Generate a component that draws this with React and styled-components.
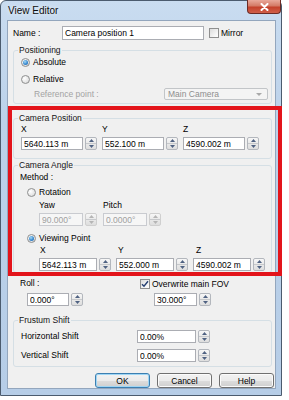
import React from "react";
import styled, { createGlobalStyle } from "styled-components";

const GlobalStyle = createGlobalStyle`
  html, body {
    margin: 0;
    padding: 0;
    background: #ffffff;
  }
  body {
    font-family: "Liberation Sans", Arial, sans-serif;
    font-size: 8.5px;
    color: #000;
  }
`;

const App = () => {
  return (
    <>
      <GlobalStyle />
      <Window>
        <TitleBar>
          <Title>View Editor</Title>
          <CloseButton>
            <svg width="9" height="8" viewBox="0 0 9 8">
              <path d="M1.5 1 L7.5 7 M7.5 1 L1.5 7" stroke="#fff" strokeWidth="2" strokeLinecap="round" />
            </svg>
          </CloseButton>
        </TitleBar>
        <Frame>
          <Client>
            <NameRow>
              <NameLabel>Name :</NameLabel>
              <NameInput readOnly defaultValue="Camera position 1" />
              <CheckBox />
              <CheckText>Mirror</CheckText>
            </NameRow>

            <Group $mt={5} $pb={3}>
              <Legend>Positioning</Legend>
              <OptionRow $mt={1}>
                <Radio $on />
                Absolute
              </OptionRow>
              <OptionRow $mt={5}>
                <Radio />
                Relative
              </OptionRow>
              <ReferenceRow>
                <DimText>Reference point :</DimText>
                <Combo>
                  Main Camera
                  <ComboArrow />
                </Combo>
              </ReferenceRow>
            </Group>

            <Group $mt={9} $pb={8}>
              <Legend>Camera Position</Legend>
              <AxisGrid $col={76} $gap={5} $mt={1}>
                <AxisLabel>X</AxisLabel>
                <AxisLabel>Y</AxisLabel>
                <AxisLabel>Z</AxisLabel>
              </AxisGrid>
              <AxisGrid $col={76} $gap={5} $mt={3}>
                <Field value="5640.113 m" />
                <Field value="552.100 m" />
                <Field value="4590.002 m" />
              </AxisGrid>
            </Group>

            <Group $mt={1} $pb={1}>
              <Legend>Camera Angle</Legend>
              <MethodLabel>Method :</MethodLabel>
              <OptionRow $mt={4} $pl={6}>
                <Radio />
                Rotation
              </OptionRow>
              <SubGrid $col={58} $gap={6} $mt={2}>
                <AxisLabel>Yaw</AxisLabel>
                <AxisLabel>Pitch</AxisLabel>
              </SubGrid>
              <SubGrid $col={58} $gap={6} $mt={3}>
                <Field value="90.000°" disabled />
                <Field value="0.0000°" disabled />
              </SubGrid>
              <OptionRow $mt={6} $pl={6}>
                <Radio $on />
                Viewing Point
              </OptionRow>
              <SubGrid $col={72} $gap={5} $mt={1}>
                <AxisLabel $pl={1}>X</AxisLabel>
                <AxisLabel $pl={2}>Y</AxisLabel>
                <AxisLabel $pl={3}>Z</AxisLabel>
              </SubGrid>
              <SubGrid $col={72} $gap={5} $mt={3}>
                <Field value="5642.113 m" />
                <Field value="552.000 m" />
                <Field value="4590.002 m" />
              </SubGrid>
            </Group>

            <RollGrid>
              <PlainLabel>Roll :</PlainLabel>
              <CheckRow>
                <CheckBox $checked>
                  <svg width="8" height="8" viewBox="0 0 8 8">
                    <path d="M1 4.2 L3 6.3 L7 1.2" stroke="#243f72" strokeWidth="1.4" fill="none" />
                  </svg>
                </CheckBox>
                <CheckText>Overwrite main FOV</CheckText>
              </CheckRow>
              <Indent $pl={7} $w={56}>
                <Field value="0.000°" />
              </Indent>
              <Indent $pl={14} $w={57}>
                <Field value="30.000°" />
              </Indent>
            </RollGrid>

            <Group $mt={9} $pb={4}>
              <Legend>Frustum Shift</Legend>
              <ShiftRow $mt={5}>
                <PlainLabel>Horizontal Shift</PlainLabel>
                <Field value="0.00%" />
              </ShiftRow>
              <ShiftRow $mt={6}>
                <PlainLabel>Vertical Shift</PlainLabel>
                <Field value="0.00%" />
              </ShiftRow>
            </Group>

            <ButtonBar>
              <Button $default>OK</Button>
              <Button>Cancel</Button>
              <Button>Help</Button>
            </ButtonBar>
          </Client>
        </Frame>
        <Highlight />
      </Window>
    </>
  );
};

export default App;

const Field = ({ value, disabled }) => (
  <FieldWrap>
    <TextBox readOnly defaultValue={value} disabled={disabled} />
    <Spinner $disabled={disabled}>
      <SpinHalf>
        <svg width="5" height="3" viewBox="0 0 5 3">
          <path d="M0 3 L2.5 0 L5 3 Z" fill={disabled ? "#b5b5b5" : "#4f6282"} />
        </svg>
      </SpinHalf>
      <SpinHalf>
        <svg width="5" height="3" viewBox="0 0 5 3">
          <path d="M0 0 L2.5 3 L5 0 Z" fill={disabled ? "#b5b5b5" : "#4f6282"} />
        </svg>
      </SpinHalf>
    </Spinner>
  </FieldWrap>
);

const Window = styled.div`
  position: relative;
  width: 282px;
  height: 396px;
  box-sizing: border-box;
  border: 1px solid #4b5b6e;
  border-radius: 6px 6px 0 0;
  background: linear-gradient(180deg, #c9dcf0 0%, #bcd2ea 30%, #b6cde7 100%);
  display: flex;
  flex-direction: column;
`;

const TitleBar = styled.div`
  height: 19px;
  display: flex;
  justify-content: space-between;
  align-items: flex-start;
  padding-left: 7px;
`;

const Title = styled.div`
  font-size: 10px;
  line-height: 19px;
  color: #0c0c0c;
  text-shadow: 0 0 4px rgba(255, 255, 255, 0.9);
`;

const CloseButton = styled.div`
  width: 34px;
  height: 14px;
  margin-top: -1px;
  box-sizing: border-box;
  border: 1px solid #6b2b25;
  border-top: none;
  border-radius: 0 0 4px 4px;
  background: linear-gradient(180deg, #e9a99b 0%, #d47a66 45%, #c4412b 55%, #d0604a 100%);
  display: flex;
  align-items: center;
  justify-content: center;
`;

const Frame = styled.div`
  flex: 1;
  display: flex;
  padding: 0 5px 6px 6px;
`;

const Client = styled.div`
  flex: 1;
  display: flex;
  flex-direction: column;
  border: 1px solid #93a6bd;
  background: #f0f0f0;
`;

const NameRow = styled.div`
  display: flex;
  align-items: center;
  height: 14px;
  margin-top: 5px;
  padding-left: 5px;
`;

const NameLabel = styled.div`
  width: 49px;
`;

const NameInput = styled.input`
  width: 142px;
  height: 14px;
  box-sizing: border-box;
  margin: 0;
  padding: 0 0 0 2px;
  border: 1px solid #abadb3;
  background: #fff;
  font: inherit;
  color: #000;
  outline: none;
`;

const CheckBox = styled.span`
  width: 10px;
  height: 10px;
  box-sizing: border-box;
  margin-left: ${(p) => (p.$checked ? 0 : 5)}px;
  border: 1px solid #8f8f8f;
  background: linear-gradient(135deg, #dcdcdc 0%, #f6f6f6 70%, #ffffff 100%);
  display: inline-flex;
  align-items: center;
  justify-content: center;
`;

const CheckText = styled.span`
  margin-left: 2px;
`;

const CheckRow = styled.div`
  display: flex;
  align-items: center;
`;

const Group = styled.fieldset`
  margin: ${(p) => p.$mt}px 3px 0 5px;
  padding: 0 3px ${(p) => p.$pb}px 7px;
  border: 1px solid #d5dfe5;
  border-radius: 3px;
  min-width: 0;
`;

const Legend = styled.legend`
  margin-left: -3px;
  padding: 0 1px;
  height: 10px;
  line-height: 10px;
  color: #151515;
`;

const OptionRow = styled.div`
  display: flex;
  align-items: center;
  height: 12px;
  margin-top: ${(p) => p.$mt}px;
  padding-left: ${(p) => p.$pl || 0}px;
`;

const Radio = styled.span`
  width: 9px;
  height: 9px;
  box-sizing: border-box;
  margin-right: 3px;
  border-radius: 50%;
  border: 1px solid #8e8f8f;
  background: radial-gradient(circle at 35% 35%, #ffffff 0%, #e8e8e8 55%, #d0d0d0 100%);
  display: inline-flex;
  align-items: center;
  justify-content: center;

  &::after {
    content: "";
    display: ${(p) => (p.$on ? "block" : "none")};
    width: 5px;
    height: 5px;
    border-radius: 50%;
    background: radial-gradient(circle at 40% 35%, #a6dcf8 0%, #3a8ad0 55%, #1b5ea6 100%);
  }
`;

const ReferenceRow = styled.div`
  display: flex;
  align-items: center;
  height: 12px;
  margin-top: 3px;
  padding-left: 13px;
`;

const DimText = styled.span`
  color: #a3a3a3;
`;

const Combo = styled.div`
  margin-left: auto;
  width: 104px;
  height: 12px;
  box-sizing: border-box;
  border: 1px solid #c2c5c8;
  border-radius: 2px;
  background: #f4f4f4;
  color: #8e8e8e;
  display: flex;
  align-items: center;
  padding-left: 3px;
`;

const ComboArrow = styled.span`
  margin-left: auto;
  margin-right: 5px;
  width: 0;
  height: 0;
  border-left: 3px solid transparent;
  border-right: 3px solid transparent;
  border-top: 3px solid #a9a9a9;
`;

const AxisGrid = styled.div`
  display: grid;
  grid-template-columns: repeat(3, ${(p) => p.$col}px);
  column-gap: ${(p) => p.$gap}px;
  margin-top: ${(p) => p.$mt}px;
  align-items: center;
`;

const SubGrid = styled(AxisGrid)`
  grid-template-columns: repeat(auto-fill, ${(p) => p.$col}px);
  padding-left: 18px;
`;

const AxisLabel = styled.div`
  height: 10px;
  line-height: 10px;
  padding-left: ${(p) => p.$pl || 0}px;
`;

const MethodLabel = styled.div`
  height: 10px;
  line-height: 10px;
  margin-top: 2px;
  margin-left: -1px;
`;

const PlainLabel = styled.div`
  line-height: 11px;
`;

const FieldWrap = styled.div`
  display: flex;
  height: 13px;
  min-width: 0;
`;

const TextBox = styled.input`
  flex: 1;
  min-width: 0;
  height: 13px;
  box-sizing: border-box;
  margin: 0;
  padding: 0 0 0 2px;
  border: 1px solid ${(p) => (p.disabled ? "#c9cbd0" : "#abadb3")};
  background: ${(p) => (p.disabled ? "#f6f6f6" : "#ffffff")};
  color: ${(p) => (p.disabled ? "#a0a0a0" : "#000000")};
  font: inherit;
  outline: none;
`;

const Spinner = styled.div`
  width: 12px;
  margin-left: 2px;
  box-sizing: border-box;
  border: 1px solid ${(p) => (p.$disabled ? "#cfcfcf" : "#b3b7bd")};
  border-radius: 2px;
  background: linear-gradient(180deg, #f7f7f7 0%, #e9e9e9 50%, #dedede 100%);
  display: flex;
  flex-direction: column;
`;

const SpinHalf = styled.div`
  flex: 1;
  display: flex;
  align-items: center;
  justify-content: center;

  & + & {
    border-top: 1px solid #c7c9cc;
  }
`;

const RollGrid = styled.div`
  display: grid;
  grid-template-columns: 120px 1fr;
  grid-template-rows: 11px 13px;
  row-gap: 4px;
  margin-top: 5px;
  padding-left: 12px;
`;

const Indent = styled.div`
  padding-left: ${(p) => p.$pl}px;
  width: ${(p) => p.$w}px;
`;

const ShiftRow = styled.div`
  display: grid;
  grid-template-columns: 116px 73px;
  align-items: center;
  height: 13px;
  margin-top: ${(p) => p.$mt}px;
`;

const ButtonBar = styled.div`
  display: flex;
  justify-content: flex-end;
  gap: 7px;
  margin-top: 6px;
  padding-right: 1px;
`;

const Button = styled.button`
  width: 55px;
  height: 15px;
  box-sizing: border-box;
  margin: 0;
  padding: 0;
  font: inherit;
  color: #000;
  border: 1px solid ${(p) => (p.$default ? "#3c7fb1" : "#707070")};
  border-radius: 3px;
  background: linear-gradient(180deg, #f2f2f2 0%, #ebebeb 50%, #dddddd 51%, #cfcfcf 100%);
  box-shadow: inset 0 0 0 1px ${(p) => (p.$default ? "#9fd6f5" : "#fbfbfb")};
`;

const Highlight = styled.div`
  position: absolute;
  left: 7px;
  top: 105px;
  width: 274px;
  height: 170px;
  box-sizing: border-box;
  border: 4px solid #e3141b;
  pointer-events: none;
`;
